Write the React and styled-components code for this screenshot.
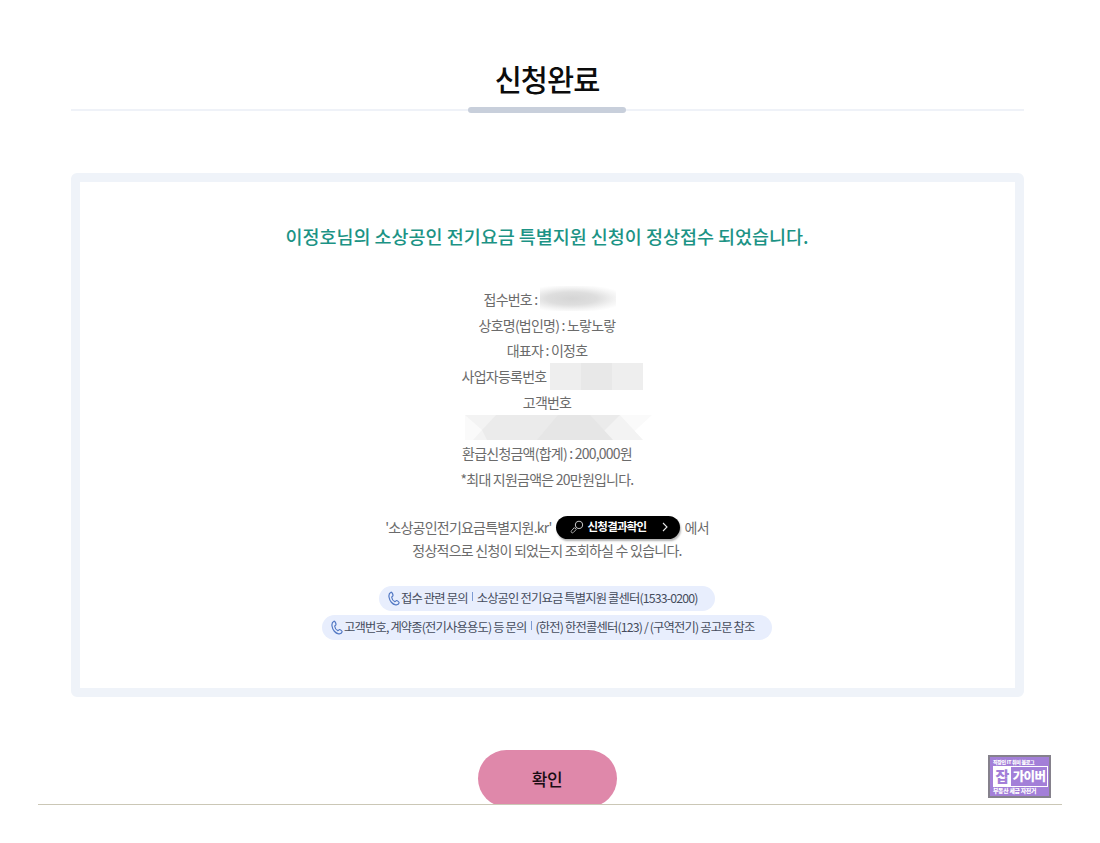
import React from "react";
import styled, { createGlobalStyle } from "styled-components";

const GlobalStyle = createGlobalStyle`
    body {
        margin: 0;
        background-color: #fff;
        font-family: "Noto Sans CJK KR", "Noto Sans", sans-serif;
        overflow: hidden;
    }
`;

const PhoneIcon = () => (
    <svg width="12" height="15" viewBox="0 0 12 15" fill="none" stroke="#5379c4" strokeWidth="1.2" strokeLinejoin="round" strokeLinecap="round">
        <path d="M3 1.2 C1.2 2 .7 3.8 1 6 C1.6 10 4.4 13.4 7.6 13.8 C9.2 14 10.8 13.2 11.1 11.9 C11.3 11.2 9.2 9.3 8.5 9.5 C7.8 9.7 7.5 10.8 6.8 10.6 C5.2 9.9 3.9 7.9 3.7 6.2 C3.7 5.5 5 5.4 5 4.6 C5 3.5 4 .9 3 1.2 Z" />
    </svg>
);

const SearchIcon = () => (
    <svg width="14" height="14" viewBox="0 0 14 14" fill="none" stroke="#bdbdbd" strokeLinecap="round">
        <circle cx="9" cy="4.9" r="3.6" strokeWidth="1.1" />
        <path d="M6.4 7.5 L5.4 8.5" strokeWidth="1" />
        <path d="M4.6 7.9 L6.2 9.5 L3.2 12.6 C2 13.6 .3 12 1.4 10.8 Z" strokeWidth=".9" />
    </svg>
);

const ArrowIcon = () => (
    <svg width="6" height="10" viewBox="0 0 6 10" fill="none" stroke="#e8e8e8" strokeWidth="1.1">
        <path d="M1 1 L5 5 L1 9" />
    </svg>
);

const App = () => {
    return (
        <Page>
            <GlobalStyle />
            <Content>
                <Title>신청완료</Title>
                <TitleLine>
                    <TitleBar />
                </TitleLine>
                <Panel>
                    <Heading>이정호님의 소상공인 전기요금 특별지원 신청이 정상접수 되었습니다.</Heading>
                    <Info>
                        <Row $shift={6}>
                            접수번호 :<Blurred />
                        </Row>
                        <Row>상호명(법인명) : 노랗노랗</Row>
                        <Row>대표자 : 이정호</Row>
                        <Row $shift={11}>
                            사업자등록번호
                            <Mosaic>
                                <i />
                                <i />
                                <i />
                            </Mosaic>
                        </Row>
                        <Row>고객번호</Row>
                        <Row $shift={23}>
                            <svg width="187" height="25" viewBox="0 0 187 25">
                                <path d="M0 0 H187 L160 25 H0 Z" fill="#fafafa" />
                                <path d="M0 0 H155 L178 25 H8 L17 15 Z" fill="#f3f3f3" />
                                <path d="M31 0 H155 L130 25 H22 L17 15 Z" fill="#ebebeb" />
                                <path d="M93 0 H125 L148 25 H72 Z" fill="#e6e6e6" />
                            </svg>
                        </Row>
                        <Row>환급신청금액(합계) : 200,000원</Row>
                        <Row>*최대 지원금액은 20만원입니다.</Row>
                    </Info>
                    <Notice>
                        <NoticeLine>
                            '소상공인전기요금특별지원.kr'
                            <ResultButton>
                                <SearchIcon />
                                <span>신청결과확인</span>
                                <ArrowIcon />
                            </ResultButton>
                            에서
                        </NoticeLine>
                        <NoticeLine>정상적으로 신청이 되었는지 조회하실 수 있습니다.</NoticeLine>
                    </Notice>
                    <Contacts>
                        <Pill $width={336}>
                            <PhoneIcon />
                            <span>접수 관련 문의</span>
                            <Divider />
                            <span>소상공인 전기요금 특별지원 콜센터(1533-0200)</span>
                        </Pill>
                        <Pill $width={450}>
                            <PhoneIcon />
                            <span>고객번호, 계약종(전기사용용도) 등 문의</span>
                            <Divider />
                            <span>(한전) 한전콜센터(123) / (구역전기) 공고문 참조</span>
                        </Pill>
                    </Contacts>
                </Panel>
            </Content>
            <Footer>
                <ConfirmButton>확인</ConfirmButton>
            </Footer>
            <Badge>
                <BadgeSmall>직장인 IT 취미 블로그</BadgeSmall>
                <BadgeMain>
                    <b>잡</b>
                    <span>가이버</span>
                </BadgeMain>
                <BadgeSmall $bottom>부동산 세금 자전거</BadgeSmall>
            </Badge>
        </Page>
    );
};

export default App;

const Page = styled.div`
    position: relative;
    width: 1100px;
    height: 843px;
    overflow: hidden;
    background-color: #fff;
`;

const Content = styled.div`
    width: 953px;
    margin-left: 70.5px;
    padding-top: 55px;
`;

const Title = styled.h1`
    margin: 0;
    height: 52px;
    line-height: 46px;
    font-size: 29.5px;
    font-weight: 500;
    letter-spacing: -1px;
    text-align: center;
    color: #0c0c0c;
`;

const TitleLine = styled.div`
    height: 6px;
    display: flex;
    justify-content: center;
    background: linear-gradient(#eff2f8, #eff2f8) 0 2px / 100% 2px no-repeat;
`;

const TitleBar = styled.div`
    width: 158px;
    height: 6px;
    border-radius: 3px;
    background-color: #c8cfdb;
`;

const Panel = styled.div`
    height: 524px;
    margin-top: 60px;
    box-sizing: border-box;
    border: 9px solid #eff3f9;
    border-radius: 6px;
    text-align: center;
    color: #6b6b6b;
`;

const Heading = styled.h2`
    margin: 39px 0 0;
    height: 65px;
    line-height: 30px;
    font-size: 18.5px;
    font-weight: 500;
    letter-spacing: -0.03px;
    white-space: nowrap;
    color: #1c9385;
`;

const Info = styled.div`
    display: flex;
    flex-direction: column;
    font-size: 14px;
    letter-spacing: -0.77px;
`;

const Row = styled.div`
    height: 25.75px;
    display: flex;
    align-items: center;
    justify-content: center;
    white-space: nowrap;
    padding-left: ${({ $shift }) => $shift || 0}px;
`;

const Blurred = styled.span`
    width: 76px;
    height: 25px;
    margin-left: 3px;
    background: radial-gradient(ellipse 110% 85% at 42% 50%, #d5d5d5 0%, #dedede 30%, #f4f4f4 52%, #fff 66%);
`;

const Mosaic = styled.span`
    display: flex;
    margin-left: 4px;

    i {
        width: 31px;
        height: 27px;
        background-color: #eeeeee;
    }

    i:nth-child(2) {
        background-color: #e8e8e8;
    }
`;

const Notice = styled.div`
    margin-top: 23px;
    font-size: 14px;
    letter-spacing: -0.77px;
`;

const NoticeLine = styled.div`
    height: 23px;
    display: flex;
    align-items: center;
    justify-content: center;
    white-space: nowrap;
`;

const ResultButton = styled.span`
    width: 124px;
    height: 23px;
    margin: 1px 5px 0 4px;
    padding: 0 12px 0 14px;
    box-sizing: border-box;
    display: flex;
    align-items: center;
    border-radius: 12px;
    background-color: #000;
    box-shadow: 1px 2px 2px rgba(0, 0, 0, 0.3);
    color: #fff;
    font-size: 11.5px;
    font-weight: 700;

    span {
        margin: -2px auto 0 4px;
    }
`;

const Contacts = styled.div`
    margin-top: 25px;
    display: flex;
    flex-direction: column;
    align-items: center;
    gap: 4px;
`;

const Pill = styled.div`
    width: ${({ $width }) => $width}px;
    height: 25px;
    padding-left: 9px;
    box-sizing: border-box;
    display: flex;
    align-items: center;
    border-radius: 13px;
    background-color: #e8eefd;
    color: #454c5c;
    font-size: 12.3px;
    letter-spacing: -0.84px;
    white-space: nowrap;

    span {
        margin: -1px 0 0 1px;
    }
`;

const Divider = styled.i`
    width: 1px;
    height: 9px;
    margin: 0 3px 4px 4px;
    background-color: #7d9bd3;
`;

const Footer = styled.div`
    width: 1018px;
    height: 54px;
    margin: 53px 0 0 38px;
    padding-right: 6px;
    display: flex;
    justify-content: center;
    overflow: hidden;
    border-bottom: 1px solid #cbc7b6;
`;

const ConfirmButton = styled.button`
    flex-shrink: 0;
    width: 139px;
    height: 57px;
    padding: 0 0 1px;
    border: none;
    border-radius: 29px;
    background-color: #df88aa;
    color: #1a0d13;
    font-family: inherit;
    font-size: 17px;
    font-weight: 500;
    letter-spacing: -0.3px;
`;

const Badge = styled.div`
    position: absolute;
    left: 988px;
    top: 755px;
    width: 63px;
    height: 43px;
    padding: 1px 1px 0 3px;
    box-sizing: border-box;
    border: 2px solid #85818c;
    background-color: #a37fd8;
    color: #fff;
    overflow: hidden;
`;

const BadgeSmall = styled.div`
    height: 8px;
    line-height: 7px;
    font-size: ${({ $bottom }) => ($bottom ? 5.9 : 5)}px;
    font-weight: 900;
    letter-spacing: -0.3px;
    white-space: nowrap;
`;

const BadgeMain = styled.div`
    height: 21px;
    display: flex;
    box-sizing: border-box;
    border: 1.5px solid #fff;
    line-height: 17px;
    font-weight: 900;
    text-align: center;

    b {
        width: 17px;
        background-color: #fff;
        color: #a37fd8;
        font-size: 15px;
    }

    span {
        flex: 1;
        font-size: 12.5px;
        letter-spacing: -0.6px;
    }
`;
